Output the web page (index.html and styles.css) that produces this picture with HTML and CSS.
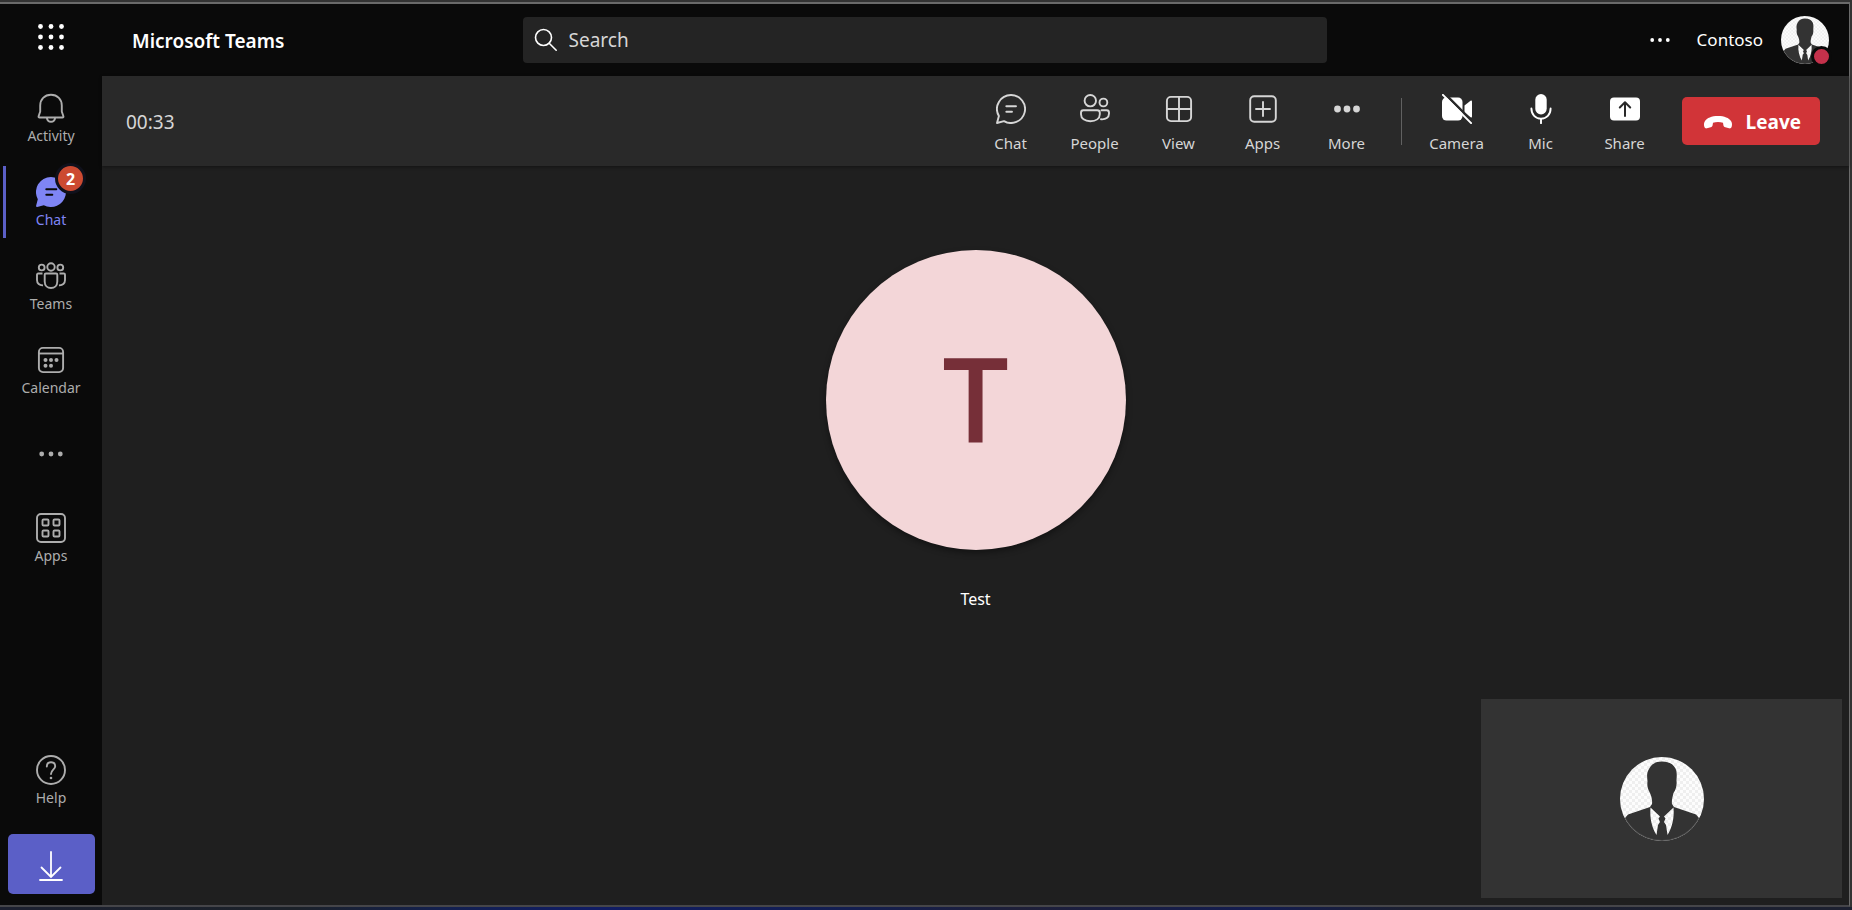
FILE: index.html
```html
<!DOCTYPE html>
<html lang="en">
<head>
<meta charset="utf-8">
<title>Microsoft Teams</title>
<link rel="stylesheet" href="styles.css">
</head>
<body>
<svg class="defs" aria-hidden="true">
  <defs>
    <pattern id="checks" width="6" height="6" patternUnits="userSpaceOnUse">
      <rect width="6" height="6" fill="#fdfdfd"/>
      <path d="M0 0h3v3H0zM3 3h3v3H3z" fill="#efefef"/>
    </pattern>
    <clipPath id="round"><circle cx="42" cy="42" r="42"/></clipPath>
    <symbol id="person" viewBox="0 0 84 84">
      <g clip-path="url(#round)">
        <rect width="84" height="84" fill="url(#checks)"/>
        <path fill="#333" d="M42 4.500C49 4.500 53 7 55.500 11.500C57.500 16 56.500 20 56.500 24C57 28 56 33 53.500 36C52.500 40 51.500 44 52 47L54 50L76 57.500L79 61V84H5V61L8 57.500L30 50L32 47C32.500 43 31.500 39 29.500 35C27.500 32 27 28 27.500 24C27 20 26.500 16 29 12C32 6.500 36 4.500 42 4.500Z"/>
        <path fill="url(#checks)" d="M30.500 50.500L40 59.500L38.500 61.500L40 65L38 68L36.500 78C32 71 29.500 61 30.500 50.500ZM53.500 50.500L44 59.500L45.500 61.500L44 65L46 68L47.500 78C52 71 54.500 61 53.500 50.500Z"/>
      </g>
      <circle cx="42" cy="42" r="41.500" fill="none" stroke="#fff" stroke-opacity=".12"/>
    </symbol>
    <symbol id="apps-grid" viewBox="0 0 30 30">
      <rect x="1" y="1" width="28" height="28" rx="4"/>
      <rect x="6.500" y="6.500" width="6" height="6" rx="1"/>
      <rect x="17.500" y="6.500" width="6" height="6" rx="1"/>
      <rect x="6.500" y="17.500" width="6" height="6" rx="1"/>
      <rect x="17.500" y="17.500" width="6" height="6" rx="1"/>
    </symbol>
  </defs>
</svg>

<div class="window">
  <header class="topbar">
    <div class="lead">
      <button class="launcher" aria-label="App launcher">
        <svg class="icon" viewBox="0 0 30 30"><g fill="#fff"><circle cx="4.500" cy="4.500" r="2.400"/><circle cx="15" cy="4.500" r="2.400"/><circle cx="25.500" cy="4.500" r="2.400"/><circle cx="4.500" cy="15" r="2.400"/><circle cx="15" cy="15" r="2.400"/><circle cx="25.500" cy="15" r="2.400"/><circle cx="4.500" cy="25.500" r="2.400"/><circle cx="15" cy="25.500" r="2.400"/><circle cx="25.500" cy="25.500" r="2.400"/></g></svg>
      </button>
      <h1 class="brand">Microsoft Teams</h1>
    </div>
    <label class="search">
      <svg class="search-icon" viewBox="0 0 24 24"><circle cx="9.500" cy="9.500" r="8"/><path d="M15.200 15.200l7 7"/></svg>
      <input class="search-input" type="search" placeholder="Search" aria-label="Search">
    </label>
    <div class="account">
      <button class="account-more" aria-label="Settings and more">
        <svg class="dots-small" viewBox="0 0 20 20"><g fill="#fff"><circle cx="2.200" cy="10" r="1.900"/><circle cx="10" cy="10" r="1.900"/><circle cx="17.800" cy="10" r="1.900"/></g></svg>
      </button>
      <span class="tenant">Contoso</span>
      <button class="profile" aria-label="Profile, busy">
        <svg class="profile-photo" viewBox="0 0 84 84"><use href="#person"/></svg>
        <span class="presence"></span>
      </button>
    </div>
  </header>

  <div class="body">
    <nav class="rail" aria-label="Apps">
      <button class="rail-item">
        <svg class="icon line" viewBox="0 0 30 30"><path d="M15 1.800C8.500 1.800 4.200 6.500 4.200 12.500V18.500L2.600 23.200C2.400 24 2.800 24.500 3.500 24.500H26.500C27.200 24.500 27.600 24 27.400 23.200L25.800 18.500V12.500C25.800 6.500 21.500 1.800 15 1.800ZM10.800 24.800C11.200 27.300 12.800 28.700 15 28.700C17.200 28.700 18.800 27.300 19.200 24.800"/></svg>
        <span>Activity</span>
      </button>
      <button class="rail-item active">
        <span class="icon-wrap">
          <svg class="icon" viewBox="0 0 30 30"><path fill="currentColor" d="M15 0A15 15 0 1 1 7.800 28.200L1.200 29.900C.4 30 0 29.600.1 28.800L1.800 22.200A15 15 0 0 1 15 0Z"/><path d="M10.300 12.200h10M10.300 17.800h6" stroke="#0a0a0a" stroke-width="2" stroke-linecap="round"/></svg>
          <span class="badge">2</span>
        </span>
        <span>Chat</span>
      </button>
      <button class="rail-item">
        <svg class="icon line" viewBox="0 0 30 30"><circle cx="15" cy="6" r="3.700"/><circle cx="5.700" cy="6.500" r="2.900"/><circle cx="24.300" cy="6.500" r="2.900"/><path d="M9.900 12.500H20.100Q21.300 12.500 21.300 13.700V20.500C21.300 24.500 18.500 27 15 27C11.500 27 8.700 24.500 8.700 20.500V13.700Q8.700 12.500 9.900 12.500ZM6.500 12.500H2.200Q1 12.500 1 13.700V19C1 22.500 3.500 24.600 7 24.300M23.500 12.500H27.800Q29 12.500 29 13.700V19C29 22.500 26.500 24.600 23 24.300"/></svg>
        <span>Teams</span>
      </button>
      <button class="rail-item">
        <svg class="icon line" viewBox="0 0 30 30"><rect x="2.900" y="2.900" width="24.200" height="24.200" rx="4"/><path d="M2.900 8.500H27.100"/><g fill="currentColor" stroke="none"><circle cx="9.500" cy="15" r="2"/><circle cx="15" cy="15" r="2"/><circle cx="20.500" cy="15" r="2"/><circle cx="9.500" cy="20.700" r="2"/><circle cx="15" cy="20.700" r="2"/></g></svg>
        <span>Calendar</span>
      </button>
      <button class="rail-item only-icon" aria-label="More added apps">
        <svg class="icon" viewBox="0 0 30 30"><g fill="currentColor"><circle cx="5.700" cy="15" r="2.400"/><circle cx="15" cy="15" r="2.400"/><circle cx="24.300" cy="15" r="2.400"/></g></svg>
      </button>
      <button class="rail-item">
        <svg class="icon line" viewBox="0 0 30 30"><use href="#apps-grid"/></svg>
        <span>Apps</span>
      </button>
      <button class="rail-item push">
        <svg class="icon line" viewBox="0 0 30 30"><circle cx="15" cy="15" r="14"/><path d="M10.800 11.500C10.800 8.800 12.500 7.200 15 7.200C17.500 7.200 19.200 8.900 19.200 11.200C19.200 14.500 15 15 15 19" stroke-linecap="round"/><circle cx="15" cy="23" r="1.300" fill="currentColor" stroke="none"/></svg>
        <span>Help</span>
      </button>
      <button class="download" aria-label="Download the desktop app">
        <svg class="icon" viewBox="0 0 30 30"><path d="M15 1V25.500M5.500 16.500L15 26L24.500 16.500M4 29H26" fill="none" stroke="#fff" stroke-width="1.800" stroke-linecap="round"/></svg>
      </button>
    </nav>

    <main class="call">
      <div class="toolbar">
        <time class="timer">00:33</time>
        <div class="tools">
          <button class="tool">
            <svg class="icon line" viewBox="0 0 30 30"><path d="M15 1A14 14 0 1 1 8 27.100L1 29L2.900 22A14 14 0 0 1 15 1ZM10.300 12.200H20M10.300 17.800H16" stroke-linecap="round" stroke-linejoin="round"/></svg>
            <span>Chat</span>
          </button>
          <button class="tool">
            <svg class="icon line" viewBox="0 0 30 30"><circle cx="10.300" cy="6.700" r="5.700"/><circle cx="23.400" cy="8.500" r="3.900"/><path d="M3.300 16.200H17.300Q19.800 16.200 19.800 18.700V20.200C19.800 24.500 16 27.200 10.300 27.200C4.700 27.200 1 24.500 1 20.200V18.700Q1 16.200 3.300 16.200ZM21.500 16.200H26.700Q29 16.200 29 18.700V19.500C29 23.500 25.800 25.700 21 25.300" stroke-linecap="round"/></svg>
            <span>People</span>
          </button>
          <button class="tool">
            <svg class="icon line" viewBox="0 0 30 30"><rect x="2.900" y="2.900" width="24.200" height="24.200" rx="4"/><path d="M15 3V27M3 15H27"/></svg>
            <span>View</span>
          </button>
          <button class="tool">
            <svg class="icon line" viewBox="0 0 30 30"><rect x="2.200" y="2.200" width="25.600" height="25.600" rx="4"/><path d="M15 8V22M8 15H22" stroke-linecap="round"/></svg>
            <span>Apps</span>
          </button>
          <button class="tool">
            <svg class="icon" viewBox="0 0 30 30"><g fill="currentColor"><circle cx="5.500" cy="15" r="3.400"/><circle cx="15" cy="15" r="3.400"/><circle cx="24.500" cy="15" r="3.400"/></g></svg>
            <span>More</span>
          </button>
        </div>
        <div class="tools devices">
          <button class="tool">
            <svg class="icon" viewBox="0 0 30 30"><rect y="3.500" width="20.500" height="23" rx="4.500" fill="#fff"/><path d="M22.500 11.500L28.500 6.800Q30 6 30 7.500V22.500Q30 24 28.500 23.200L22.500 18.500Z" fill="#fff"/><path d="M2.500 -.5L31.500 28.500" stroke="#292929" stroke-width="2.600"/><path d="M.9 .9L29.100 29.100" stroke="#fff" stroke-width="2" stroke-linecap="round"/></svg>
            <span>Camera</span>
          </button>
          <button class="tool">
            <svg class="icon" viewBox="0 0 30 30"><rect x="9.300" width="11.400" height="20.500" rx="5.700" fill="#fff"/><path d="M5.400 14.500C5.400 20.500 9.500 24.600 15 24.600C20.500 24.600 24.600 20.500 24.600 14.500M15 24.600V29.200" fill="none" stroke="#fff" stroke-width="1.900" stroke-linecap="round"/></svg>
            <span>Mic</span>
          </button>
          <button class="tool">
            <svg class="icon" viewBox="0 0 30 30"><rect y="3.500" width="30" height="23" rx="4" fill="#fff"/><path d="M15 22V8.500M9.800 13.500L15 8.300L20.200 13.500" fill="none" stroke="#292929" stroke-width="2" stroke-linecap="round" stroke-linejoin="round"/></svg>
            <span>Share</span>
          </button>
        </div>
        <button class="leave">
          <svg class="icon" viewBox="0 0 30 30"><path fill="#fff" d="M15 9C21.500 9 26 11 28 14C29.300 16 29.200 18 28.600 20C28.200 21.200 27.200 21.600 26 21.300L22.300 20.300C21.200 20 20.600 19.200 20.400 18.200L20 15.700C17 14.700 13 14.700 10 15.700L9.600 18.200C9.400 19.200 8.800 20 7.700 20.300L4 21.300C2.800 21.600 1.800 21.200 1.400 20C.8 18 .7 16 2 14C4 11 8.500 9 15 9Z"/></svg>
          <span>Leave</span>
        </button>
      </div>

      <section class="stage">
        <div class="participant">T</div>
        <p class="participant-name">Test</p>
        <div class="self-view">
          <svg class="self-photo" viewBox="0 0 84 84"><use href="#person"/></svg>
        </div>
      </section>
    </main>
  </div>
</div>
<div class="desktop-edge"></div>
</body>
</html>
```
FILE: styles.css
```css
* {
  box-sizing: border-box;
}

body {
  margin: 0;
  height: 100vh;
  display: flex;
  flex-direction: column;
  background: #333;
  color: #fff;
  font-family: "Noto Sans", "Open Sans", sans-serif;
}

button {
  margin: 0;
  padding: 0;
  border: 0;
  background: none;
  color: inherit;
  font: inherit;
  cursor: pointer;
}

svg {
  display: block;
  flex: none;
}

.defs {
  position: absolute;
  width: 0;
  height: 0;
}

.icon {
  width: 30px;
  height: 30px;
}

.line {
  fill: none;
  stroke: currentColor;
  stroke-width: 1.9;
}

.window {
  flex: 1;
  min-height: 0;
  margin: 2px 2px 0 0;
  display: flex;
  flex-direction: column;
  border-top: 2px solid #6a6a6a;
  border-right: 1px solid #6a6a6a;
  border-bottom: 2px solid #454549;
  background: #0a0a0a;
}

.desktop-edge {
  height: 3px;
  flex: none;
  background: linear-gradient(90deg, #1c2030, #1b2129 16%, #13204f 24%, #101c64 32%, #131e50 46%, #1e1f38 55%, #131c50 68%, #1b1f30 76%, #1c2030);
}

.topbar {
  height: 72px;
  flex: none;
  display: grid;
  grid-template-columns: 1fr 804px 1fr;
  align-items: center;
}

.lead {
  display: flex;
  align-items: center;
}

.launcher {
  width: 102px;
  display: flex;
  justify-content: center;
  padding-bottom: 6px;
}

.brand {
  margin: 0;
  padding: 2px 0 0 30px;
  font-size: 19px;
  font-weight: 600;
  line-height: 26px;
}

.search {
  height: 46px;
  display: flex;
  align-items: center;
  gap: 11px;
  padding: 0 11px;
  border-radius: 4px;
  background: #242424;
}

.search-icon {
  width: 24px;
  height: 24px;
  fill: none;
  stroke: #fff;
  stroke-width: 1.6;
  stroke-linecap: round;
}

.search-input {
  flex: 1;
  min-width: 0;
  padding: 0;
  border: 0;
  outline: 0;
  background: none;
  color: #fff;
  font: inherit;
  font-size: 19px;
}

.search-input::placeholder {
  color: #d6d6d6;
  opacity: 1;
}

.account {
  display: flex;
  align-items: center;
  justify-content: flex-end;
  padding-right: 20px;
}

.dots-small {
  width: 20px;
  height: 20px;
}

.tenant {
  margin: 0 18px 0 27px;
  font-size: 17px;
  line-height: 24px;
}

.profile {
  position: relative;
}

.profile-photo {
  width: 48px;
  height: 48px;
}

.presence {
  position: absolute;
  right: -3px;
  bottom: -3px;
  width: 21px;
  height: 21px;
  border: 3px solid #0a0a0a;
  border-radius: 50%;
  background: #c4314b;
}

.body {
  flex: 1;
  min-height: 0;
  display: flex;
}

.rail {
  width: 102px;
  flex: none;
  display: flex;
  flex-direction: column;
  padding-bottom: 11px;
  color: #adadad;
}

.rail-item {
  position: relative;
  height: 84px;
  display: flex;
  flex-direction: column;
  align-items: center;
  gap: 3px;
  padding-top: 17px;
  font-size: 14px;
  line-height: 20px;
}

.only-icon {
  padding-top: 27px;
}

.push {
  margin-top: auto;
}

.active {
  color: #7f85f5;
}

.active::before {
  content: "";
  position: absolute;
  left: 3px;
  top: 6px;
  bottom: 6px;
  width: 3px;
  background: #5b5fc7;
}

.icon-wrap {
  position: relative;
}

.badge {
  position: absolute;
  left: 19px;
  top: -14px;
  width: 31px;
  height: 31px;
  border: 3px solid #10111c;
  border-radius: 50%;
  background: #cc4a31;
  color: #fff;
  font-size: 16px;
  font-weight: 700;
  line-height: 26px;
  text-align: center;
}

.download {
  height: 60px;
  margin: 12px 7px 0 8px;
  display: flex;
  align-items: center;
  justify-content: center;
  padding: 4px 2px 0 0;
  border-radius: 5px;
  background: #5b5fc7;
}

.call {
  flex: 1;
  min-width: 0;
  display: flex;
  flex-direction: column;
  background: #1f1f1f;
}

.toolbar {
  height: 90px;
  flex: none;
  display: flex;
  align-items: center;
  padding: 0 29px 0 24px;
  background: #292929;
  box-shadow: 0 1px 3px #0006;
  color: #d6d6d6;
}

.timer {
  margin-right: auto;
  padding-top: 2px;
  font-size: 19px;
  line-height: 26px;
}

.tools {
  display: flex;
  padding-top: 5px;
}

.devices {
  position: relative;
  margin-left: 26px;
}

.devices::before {
  content: "";
  position: absolute;
  left: -14px;
  top: 9px;
  bottom: 9px;
  width: 1px;
  background: #616161;
}

.tool {
  width: 84px;
  display: flex;
  flex-direction: column;
  align-items: center;
  gap: 8px;
  font-size: 15px;
  line-height: 22px;
}

.leave {
  height: 48px;
  margin-left: 15px;
  display: flex;
  align-items: center;
  gap: 13px;
  padding: 2px 19px 0 21px;
  border-radius: 5px;
  background: #d13438;
  color: #fff;
  font: 700 19px/26px "Open Sans", "Noto Sans", sans-serif;
}

.stage {
  position: relative;
  flex: 1;
  display: flex;
  flex-direction: column;
  align-items: center;
  padding-top: 84px;
}

.participant {
  width: 300px;
  height: 300px;
  border-radius: 50%;
  background: #f3d6d8;
  box-shadow: 0 3px 6px #0006;
  color: #762f38;
  font: 600 118px/294px "Open Sans", "Noto Sans", sans-serif;
  text-align: center;
}

.participant-name {
  margin: 37px 0 0;
  font-size: 16px;
  line-height: 24px;
}

.self-view {
  position: absolute;
  right: 7px;
  bottom: 7px;
  width: 361px;
  height: 199px;
  display: flex;
  align-items: center;
  justify-content: center;
  background: #333;
}

.self-photo {
  width: 84px;
  height: 84px;
}
```
